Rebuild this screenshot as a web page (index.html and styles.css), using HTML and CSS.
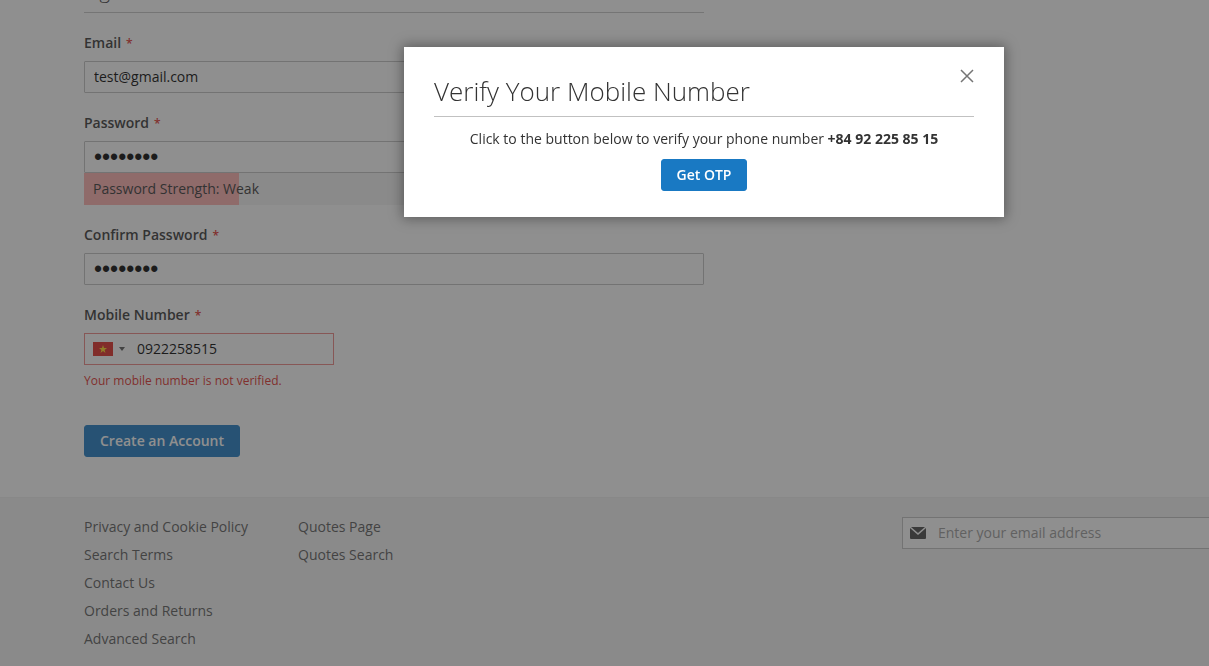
FILE: index.html
```html
<!DOCTYPE html>
<html lang="en">
<head>
  <meta charset="UTF-8" />
  <meta name="viewport" content="width=device-width, initial-scale=1.0"/>
  <title>Create New Customer Account</title>
  <link rel="stylesheet" href="styles.css">
</head>
<body>

  <main class="page-main">
    <form class="form-create-account">
      <h2 class="legend">Sign-in Information</h2>

      <div class="field">
        <label class="label" for="email">Email</label>
        <input class="input-text" type="email" id="email" value="test@gmail.com">
      </div>

      <div class="field">
        <label class="label" for="password">Password</label>
        <input class="input-text" type="password" id="password" value="password">
        <div class="strength-meter">Password Strength: Weak</div>
      </div>

      <div class="field">
        <label class="label" for="confirm">Confirm Password</label>
        <input class="input-text" type="password" id="confirm" value="password">
      </div>

      <div class="field">
        <label class="label" for="mobile">Mobile Number</label>
        <div class="tel-input">
          <button class="country" type="button" aria-label="Vietnam">
            <svg class="flag" viewBox="0 0 20 14">
              <rect width="20" height="14" fill="#e0261f"/>
              <path fill="#ffd81a" d="M10 3l1 3h3l-2.400 1.900.9 3L10 9.100 7.500 10.900l.9-3L6 6h3z"/>
            </svg>
            <span class="arrow"></span>
          </button>
          <input type="tel" id="mobile" value="0922258515">
        </div>
        <div class="error">Your mobile number is not verified.</div>
      </div>

      <button class="action primary create" type="submit">Create an Account</button>
    </form>
  </main>

  <footer class="page-footer">
    <ul class="links">
      <li><a href="#">Privacy and Cookie Policy</a></li>
      <li><a href="#">Search Terms</a></li>
      <li><a href="#">Contact Us</a></li>
      <li><a href="#">Orders and Returns</a></li>
      <li><a href="#">Advanced Search</a></li>
    </ul>
    <ul class="links">
      <li><a href="#">Quotes Page</a></li>
      <li><a href="#">Quotes Search</a></li>
    </ul>
    <div class="newsletter">
      <svg class="mail" viewBox="0 0 16 12">
        <path d="M1 0h14l-7 6z"/>
        <path d="M0 1l8 7 8-7v10q0 1-1 1H1q-1 0-1-1z"/>
      </svg>
      <input type="email" placeholder="Enter your email address" aria-label="Enter your email address">
    </div>
  </footer>

  <div class="overlay">
    <div class="modal" role="dialog" aria-labelledby="modal-title">
      <button class="close" type="button" aria-label="Close">
        <svg viewBox="0 0 12 12"><path d="M0 0l12 12M12 0L0 12"/></svg>
      </button>
      <h1 id="modal-title">Verify Your Mobile Number</h1>
      <p>Click to the button below to verify your phone number <strong>+84 92 225 85 15</strong></p>
      <button class="action primary" type="button">Get OTP</button>
    </div>
  </div>

</body>
</html>
```
FILE: styles.css
```css
* {
  box-sizing: border-box;
}
body {
  margin: 0;
  font-family: 'Open Sans', sans-serif;
  font-size: 14px;
  line-height: 20px;
  color: #333;
  background: #fff;
  min-height: 100vh;
  overflow: hidden;
  display: flex;
  flex-direction: column;
}

input,
button {
  font-family: inherit;
  font-size: 14px;
  margin: 0;
}

.page-main {
  padding-left: 84px;
}

.form-create-account {
  max-width: 620px;
  margin-top: -21px;
  margin-bottom: 40px;
}

.legend {
  margin: 0 0 20px;
  padding-bottom: 9px;
  border-bottom: 1px solid #c6c6c6;
  font-size: 20px;
  font-weight: 300;
  line-height: 24px;
}

.field {
  margin-bottom: 20px;
}

.label {
  display: block;
  margin-bottom: 8px;
  font-weight: 600;
}
.label::after {
  content: '*';
  margin-left: 5px;
  color: #e02b27;
  font-size: 12px;
  line-height: 1;
}

.input-text {
  display: block;
  width: 100%;
  height: 32px;
  padding: 0 9px 2px;
  border: 1px solid #c2c2c2;
  border-radius: 1px;
  background: #fff;
  color: #000;
}
.input-text[type="password"] {
  padding-bottom: 0;
  font-family: 'Liberation Sans', Arial, sans-serif;
  font-size: 23px;
}

.strength-meter {
  height: 32px;
  padding: 0 9px;
  line-height: 32px;
  background: linear-gradient(90deg, #ffafae 25%, #f4f4f4 25%);
}

.tel-input {
  display: flex;
  width: 250px;
  height: 32px;
  border: 1px solid #ed8380;
  background: #fff;
}
.tel-input input {
  flex: 1;
  min-width: 0;
  padding: 0 9px 2px 6px;
  border: 0;
  background: none;
  color: #000;
}

.country {
  display: flex;
  align-items: center;
  gap: 6px;
  width: 46px;
  padding: 0 0 0 8px;
  border: 0;
  background: none;
}
.flag {
  width: 20px;
  height: 14px;
}
.arrow {
  border: 3px solid transparent;
  border-top: 4px solid #555;
  border-bottom: 0;
}

.error {
  margin-top: 7px;
  color: #e02b27;
  font-size: 12px;
  line-height: 17px;
}

.action.primary {
  height: 32px;
  padding: 0 15px 2px;
  border: 1px solid #1979c3;
  border-radius: 3px;
  background: #1979c3;
  color: #fff;
  font-weight: 600;
}
.create {
  display: block;
  margin-top: 36px;
}

.page-footer {
  flex: 1;
  display: flex;
  padding: 19px 0 0 84px;
  border-top: 1px solid #f0f0f0;
  background: #f4f4f4;
}

.links {
  list-style: none;
  margin: 0 50px 0 0;
  padding: 0;
}
.links li {
  margin-bottom: 8px;
}
.links a {
  color: #575757;
  text-decoration: none;
}

.newsletter {
  display: flex;
  align-items: center;
  width: 307px;
  height: 32px;
  margin-left: auto;
  padding-left: 7px;
  border: 1px solid #c2c2c2;
  border-right: 0;
  background: #fff;
}
.newsletter input {
  flex: 1;
  min-width: 0;
  padding: 0 12px 2px;
  border: 0;
  background: none;
}
.newsletter input::placeholder {
  color: #999;
}
.mail {
  width: 16px;
  height: 12px;
  fill: #444;
}

.overlay {
  position: fixed;
  inset: 0;
  display: flex;
  justify-content: center;
  align-items: flex-start;
  padding: 47px 0 0 199px;
  background: rgba(51, 51, 51, 0.55);
}

.modal {
  position: relative;
  width: 600px;
  padding: 30px 30px 26px;
  background: #fff;
  box-shadow: 0 0 12px 2px rgba(0, 0, 0, 0.35);
  text-align: center;
}
.modal h1 {
  margin: 0 0 12px;
  padding-bottom: 10px;
  border-bottom: 1px solid #c1c1c1;
  font-size: 26px;
  font-weight: 300;
  line-height: 29px;
  text-align: left;
}
.modal p {
  margin: 0 0 10px;
}
.modal strong {
  font-weight: 700;
}

.close {
  position: absolute;
  top: 13px;
  right: 21px;
  width: 32px;
  height: 32px;
  padding: 10px;
  border: 0;
  background: none;
}
.close svg {
  display: block;
  width: 12px;
  height: 12px;
  overflow: visible;
  stroke: #757575;
  stroke-width: 1.500;
}
```
